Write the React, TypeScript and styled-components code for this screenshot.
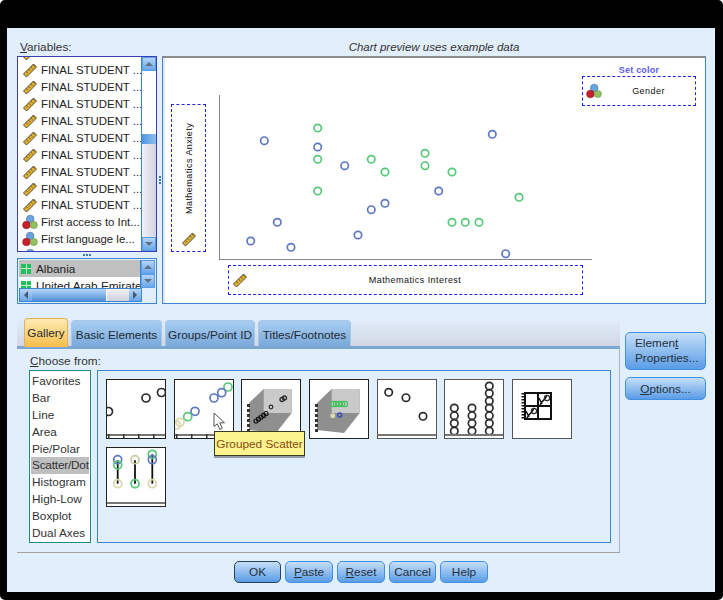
import React from 'react';
import styled, { createGlobalStyle } from 'styled-components';

const GlobalStyle = createGlobalStyle`
  html, body {
    margin: 0;
    padding: 0;
    background: #fff;
  }
  body {
    font-family: "Liberation Sans", Arial, sans-serif;
    font-size: 11.8px;
    color: #222;
  }
`;

const Frame = styled.div`
  width: 723px;
  height: 600px;
  box-sizing: border-box;
  padding: 28px 8px 8px 7px;
  background: #000;
  border-radius: 5px;
`;

const Dialog = styled.div`
  height: 564px;
  box-sizing: border-box;
  padding: 12px 9px 0 10px;
  background: #e1eefb;
  display: flex;
  flex-direction: column;
`;

const HeaderRow = styled.div`
  height: 16px;
  display: flex;
  align-items: flex-start;
  justify-content: space-between;
  line-height: 14px;
`;

const FieldLabel = styled.div`
  padding-left: 3px;
  color: #333;
`;

const PreviewNote = styled.div`
  width: 544px;
  text-align: center;
  font-style: italic;
  font-size: 11.5px;
  color: #333;
`;

const TopArea = styled.div`
  display: flex;
  height: 248px;
`;

const SourceColumn = styled.div`
  width: 140px;
  display: flex;
  flex-direction: column;
`;

const ListFrame = styled.div<{ $focused?: boolean }>`
  display: flex;
  box-sizing: border-box;
  background: #fff;
  border: 1px solid ${(p) => (p.$focused ? '#3c3cb4' : '#3b86cf')};
`;

const VariableFrame = styled(ListFrame)`
  height: 196px;
`;

const VariableRows = styled.div`
  flex: 1;
  min-width: 0;
  overflow: hidden;
  padding-left: 4px;
`;

const RowsShift = styled.div`
  margin-top: -12px;
`;

const VariableRow = styled.div`
  height: 16.9px;
  display: flex;
  align-items: center;
  gap: 3px;
  font-size: 11.4px;
  white-space: nowrap;
  color: #222;
`;

const HSplitter = styled.div`
  height: 6px;
  display: flex;
  justify-content: center;
  align-items: center;
`;

const GripDots = styled.span<{ $vertical?: boolean }>`
  display: flex;
  flex-direction: ${(p) => (p.$vertical ? 'column' : 'row')};
  gap: 1px;
  i {
    width: 2px;
    height: 2px;
    background: #3f78b8;
  }
`;

const CategoryFrame = styled(ListFrame)`
  height: 46px;
  padding: 1px;
  flex-direction: column;
  background: #e1eefb;
`;

const CategoryBody = styled.div`
  height: 28px;
  display: flex;
`;

const CategoryRows = styled.div`
  flex: 1;
  min-width: 0;
  overflow: hidden;
  background: #fff;
`;

const CategoryRow = styled.div<{ $selected?: boolean }>`
  height: 17px;
  display: flex;
  align-items: center;
  gap: 5px;
  padding-left: 2px;
  white-space: nowrap;
  background: ${(p) => (p.$selected ? '#c0c0c0' : '#fff')};
`;

const Swatch = styled.span`
  flex: none;
  width: 10px;
  height: 10px;
  background:
    linear-gradient(#c8f0d0, #c8f0d0) 50% 0 / 1px 100% no-repeat,
    linear-gradient(#c8f0d0, #c8f0d0) 0 50% / 100% 1px no-repeat,
    #1fc15a;
`;

const VScroll = styled.div`
  flex: none;
  width: 14px;
  display: flex;
  flex-direction: column;
  border-left: 1px solid #3b86cf;
`;

const HScroll = styled.div`
  height: 14px;
  width: 123px;
  display: flex;
  box-sizing: border-box;
  border: 1px solid #3b86cf;
`;

const ArrowButton = styled.div`
  flex: none;
  min-width: 12px;
  min-height: 12px;
  box-sizing: border-box;
  display: flex;
  align-items: center;
  justify-content: center;
  background: linear-gradient(#b5d5f8, #6aa6ea);
`;

const VArrowButton = styled(ArrowButton)`
  height: 14px;
  border: 1px solid #5a9fe6;
`;

const Arrow = styled.span<{ $dir: 'up' | 'down' | 'left' | 'right' }>`
  width: 0;
  height: 0;
  ${(p) =>
    p.$dir === 'up' || p.$dir === 'down'
      ? `border-left: 4px solid transparent; border-right: 4px solid transparent;`
      : `border-top: 4px solid transparent; border-bottom: 4px solid transparent;`}
  ${(p) => p.$dir === 'up' && 'border-bottom: 4px solid #5f7285;'}
  ${(p) => p.$dir === 'down' && 'border-top: 4px solid #5f7285;'}
  ${(p) => p.$dir === 'left' && 'border-right: 4px solid #44576c;'}
  ${(p) => p.$dir === 'right' && 'border-left: 4px solid #44576c;'}
`;

const TrackWhite = styled.div`
  height: 63px;
  background: #fff;
`;

const TrackThumb = styled.div`
  height: 10px;
  background: linear-gradient(90deg, #4f97e0, #8fbef0);
`;

const TrackRest = styled.div`
  flex: 1;
  background: linear-gradient(90deg, #f2f2f8, #d2d2e2);
`;

const HThumb = styled.div`
  width: 74px;
  background: linear-gradient(#b5d5f8, #4f91d8);
`;

const HRest = styled.div`
  flex: 1;
  background: linear-gradient(#f1f1f6, #d0d0df);
  border-left: 1px solid #fff;
`;

const VSplitter = styled.div`
  width: 5px;
  display: flex;
  align-items: center;
  justify-content: center;
`;

const PreviewPanel = styled.div`
  width: 544px;
  box-sizing: border-box;
  background: #fff;
  border: 1px solid #3b86cf;
  border-top: 2px solid #8b8b8b;
  display: grid;
  grid-template-columns: 35px 376px 114px;
  grid-template-rows: 1fr;
  padding: 0 9px 0 8px;
  box-shadow: inset 2px 0 0 #e6e6e6;
`;

const YColumn = styled.div`
  padding-top: 46px;
`;

const DropZone = styled.div`
  box-sizing: border-box;
  border: 1px dashed #2020f0;
  display: flex;
  align-items: center;
  font-size: 9px;
  letter-spacing: 0.45px;
  color: #111;
`;

const YZone = styled(DropZone)`
  height: 148px;
  flex-direction: column-reverse;
  padding-bottom: 4px;
`;

const YLabel = styled.div`
  flex: 1;
  display: flex;
  align-items: center;
  justify-content: center;
  writing-mode: vertical-rl;
  transform: rotate(180deg);
  white-space: nowrap;
`;

const PlotColumn = styled.div`
  padding-left: 13px;
  display: flex;
  flex-direction: column;
`;

const PlotCanvas = styled.svg`
  display: block;
  overflow: visible;
  flex: none;
`;

const XZone = styled(DropZone)`
  height: 30px;
  width: 355px;
  margin-left: 9px;
  margin-top: 5px;
  padding-left: 3px;
`;

const ZoneText = styled.div`
  flex: 1;
  text-align: center;
  white-space: nowrap;
`;

const LegendColumn = styled.div`
  padding-top: 8px;
`;

const LegendTitle = styled.div`
  height: 9px;
  line-height: 9px;
  text-align: center;
  font-size: 9px;
  font-weight: bold;
  letter-spacing: 0.2px;
  color: #5a5af0;
  margin-bottom: 1px;
`;

const LegendZone = styled(DropZone)`
  height: 30px;
  padding-left: 3px;
`;

const BottomArea = styled.div`
  margin-top: 14px;
  display: flex;
  gap: 5px;
`;

const TabPanel = styled.div`
  width: 603px;
  height: 235px;
  display: flex;
  flex-direction: column;
  box-sizing: border-box;
  border-bottom: 1px solid #a2a2a2;
`;

const TabStrip = styled.div`
  height: 31px;
  box-sizing: border-box;
  padding-left: 7px;
  display: flex;
  align-items: flex-end;
  gap: 3px;
  background: linear-gradient(#e1eefb, #d3d6e4);
  border-bottom: 3px solid #7ca6d4;
`;

const Tab = styled.div<{ $active?: boolean; $width: number }>`
  width: ${(p) => p.$width}px;
  height: ${(p) => (p.$active ? 29 : 26)}px;
  margin-bottom: ${(p) => (p.$active ? -1 : 0)}px;
  box-sizing: border-box;
  display: flex;
  align-items: center;
  justify-content: center;
  white-space: nowrap;
  border-radius: 4px 4px 0 0;
  border: 1px solid ${(p) => (p.$active ? '#dfb45c' : '#a8c8e8')};
  border-bottom: none;
  color: #1f2a33;
  padding-top: ${(p) => (p.$active ? 0 : 2)}px;
  background: ${(p) =>
    p.$active
      ? 'linear-gradient(#fdeab4, #f7be4a)'
      : 'linear-gradient(#a8cdf2, #7aa9da)'};
`;

const TabBody = styled.div`
  flex: 1;
  box-sizing: border-box;
  padding: 6px 8px 0 12px;
  border-right: 1px solid #aeb4bc;
`;

const ChooseLabel = styled.div`
  height: 15px;
  line-height: 13px;
  padding-left: 1px;
  color: #333;
`;

const ChooserRow = styled.div`
  display: flex;
  gap: 6px;
  height: 173px;
`;

const TypeList = styled.div`
  width: 62px;
  box-sizing: border-box;
  border: 1px solid #1f8f85;
  background: #fff;
  padding: 2px 1px;
`;

const TypeItem = styled.div<{ $selected?: boolean }>`
  height: 16.9px;
  line-height: 17px;
  padding-left: 1px;
  white-space: nowrap;
  color: #333;
  letter-spacing: ${(p) => (p.$selected ? '-0.2px' : '0')};
  background: ${(p) => (p.$selected ? '#bfbfbf' : 'transparent')};
`;

const GalleryBox = styled.div`
  flex: 1;
  box-sizing: border-box;
  border: 1px solid #3b86cf;
  padding: 8px;
  display: flex;
  flex-wrap: wrap;
  align-content: flex-start;
  gap: 8px 7.7px;
  position: relative;
`;

const Thumb = styled.div<{ $soft?: boolean }>`
  width: 60px;
  height: 60px;
  box-sizing: border-box;
  background: #fff;
  border: 1px solid ${(p) => (p.$soft ? '#555' : '#222')};
  overflow: hidden;
  svg {
    display: block;
    margin: -1px;
  }
`;

const Tooltip = styled.div`
  position: absolute;
  left: 116px;
  top: 60px;
  width: 91px;
  height: 25px;
  box-sizing: border-box;
  display: flex;
  align-items: center;
  justify-content: center;
  white-space: nowrap;
  background: #fbf38e;
  border: 1px solid #3a3a20;
  box-shadow: 0 2px 0 rgba(0, 0, 0, 0.35);
  color: #8a4b10;
`;

const Pointer = styled.svg`
  position: absolute;
  left: 115px;
  top: 41px;
`;

const SideButtons = styled.div`
  width: 81px;
  padding-top: 14px;
  display: flex;
  flex-direction: column;
  gap: 7px;
`;

const PushButton = styled.div<{ $default?: boolean; $width?: number; $height?: number }>`
  width: ${(p) => (p.$width ? `${p.$width}px` : '100%')};
  height: ${(p) => p.$height ?? 23}px;
  box-sizing: border-box;
  display: flex;
  align-items: center;
  justify-content: center;
  border-radius: 5px;
  border: 1px solid ${(p) => (p.$default ? '#27435f' : '#3f8fe2')};
  background: linear-gradient(#c5def9, #5a9ce6);
  color: #25303a;
  white-space: nowrap;
`;

const WrappedButton = styled(PushButton)`
  justify-content: flex-start;
  padding-left: 9px;
  line-height: 15px;
`;

const Footer = styled.div`
  padding-top: 8px;
  margin-left: -10px;
  margin-right: -9px;
  display: flex;
  justify-content: center;
  gap: 4px;
`;

const blue = '#5f78c4';
const green = '#56c878';
const khaki = '#d8d8ac';
const ink = '#2c2c2c';

const bluePoints = [
  [264.3, 140.7], [317.7, 147], [344.7, 165.7], [438.7, 191], [385, 203.3], [371.3, 209.7],
  [277.3, 222.3], [358, 235], [250.7, 241], [291, 247.3], [492.3, 134.3], [505.7, 253.7],
];

const greenPoints = [
  [317.7, 128], [317.7, 159.3], [371.3, 159.3], [385, 172], [425, 153.3], [425, 165.7],
  [452, 172], [317.7, 191], [452, 222.3], [465.3, 222.3], [479, 222.3], [519, 197.3],
];

// yellow measuring ruler used for scale variables
const RulerIcon = () => (
  <svg width="16" height="16" viewBox="0 0 16 16" style={{ flex: 'none' }}>
    <path d="M1.5 12 L11.5 2 L14.5 5 L4.5 15 Z" fill="#dfae2c" stroke="#55513c" strokeWidth="1" />
    <path d="M4.3 9.5 l1.7 1.7 M6.5 7.2 l1.7 1.7 M8.8 5 l1.7 1.7 M11 2.9 l1.7 1.7" stroke="#55513c" strokeWidth="0.9" />
  </svg>
);

// three balls used for nominal variables
const NominalIcon = () => (
  <svg width="16" height="16" viewBox="0 0 16 16" style={{ flex: 'none' }}>
    <circle cx="8.2" cy="5" r="3.8" fill="#6aa4dc" stroke="#3c6fa8" strokeWidth="0.6" />
    <circle cx="4.4" cy="11" r="3.8" fill="#c6202c" stroke="#8c1a20" strokeWidth="0.6" />
    <circle cx="11.8" cy="11" r="3.6" fill="#93c060" stroke="#6a9444" strokeWidth="0.6" />
  </svg>
);

const Ring = ({ x, y, color = ink, r = 3.7, w = 1.7 }: { x: number; y: number; color?: string; r?: number; w?: number }) => (
  <circle cx={x} cy={y} r={r} fill="none" stroke={color} strokeWidth={w} />
);

const ThumbSvg = ({ children }: { children: React.ReactNode }) => (
  <svg width="60" height="60" viewBox="0 0 60 60">
    {children}
  </svg>
);

const BaseLine = ({ ticks }: { ticks?: boolean }) => (
  <>
    <rect x="1" y="55" width="58" height="2" fill="#777" />
    {ticks &&
      [2, 17, 32, 47].map((x) => <rect key={x} x={x} y="55" width="1.5" height="4" fill="#333" />)}
  </>
);

const Cube = ({ children }: { children: React.ReactNode }) => (
  <ThumbSvg>
    <path d="M8 24 L22.7 10 L50.7 10 L50.7 34 L35 54 L8 51 Z" fill="#8f8f8f" />
    <path d="M22.7 10 H50.7 V34 H22.7 Z" fill="#c9c9c9" />
    {[25, 30, 35, 40, 45, 50].map((y) => (
      <rect key={y} x="6" y={y} width="3" height="3" fill="#333" />
    ))}
    {children}
  </ThumbSvg>
);

const ScatterThumb = () => (
  <ThumbSvg>
    <Ring x={2.5} y={32.5} r={4} />
    <Ring x={40} y={19} r={4} />
    <Ring x={55.5} y={13.5} r={4} />
    <BaseLine ticks />
  </ThumbSvg>
);

const GroupedThumb = () => (
  <ThumbSvg>
    <Ring x={54} y={8} r={4} color={green} />
    <Ring x={47.7} y={13.7} r={4} color={blue} />
    <Ring x={40} y={19} r={4} color={blue} />
    <Ring x={21} y={32.3} r={4} color={blue} />
    <Ring x={13.7} y={37.7} r={4} color={green} />
    <Ring x={6} y={43.3} r={4} color={khaki} />
    <Ring x={2.5} y={46} r={4} color={khaki} />
    <BaseLine ticks />
  </ThumbSvg>
);

const Cube3dThumb = () => (
  <Cube>
    <Ring x={30} y={28} r={1.8} w={1.2} />
    <Ring x={41} y={20.5} r={2} w={1.3} />
    <Ring x={43.5} y={19} r={2} w={1.3} />
    {[15, 17.5, 20, 22.5, 25].map((x) => (
      <Ring key={x} x={x} y={42 - (x - 15) * 0.75} r={2} w={1.2} color="#111" />
    ))}
  </Cube>
);

const GroupedCubeThumb = () => (
  <Cube>
    {[24, 27, 30, 33, 36].map((x) => (
      <Ring key={x} x={x} y={25} r={2.7} w={1.1} color="#44c05c" />
    ))}
    <circle cx="23.7" cy="36.7" r="2.5" fill={khaki} />
    <circle cx="30.7" cy="36" r="2" fill="none" stroke="#3350b8" strokeWidth="1.5" />
  </Cube>
);

const SimpleDotThumb = () => (
  <ThumbSvg>
    <Ring x={11.7} y={13.3} />
    <Ring x={29} y={18.7} />
    <Ring x={46} y={37.3} />
    <BaseLine />
  </ThumbSvg>
);

const StackedDotThumb = () => (
  <ThumbSvg>
    {[10.3, 28].map((x) =>
      [29, 36.7, 44.3, 52].map((y) => <Ring key={`${x}-${y}`} x={x} y={y} />),
    )}
    {[7, 14.3, 22, 29, 36.7, 44.3, 52].map((y) => (
      <Ring key={y} x={45.3} y={y} />
    ))}
    <BaseLine />
  </ThumbSvg>
);

const MatrixThumb = () => (
  <ThumbSvg>
    <rect x="12" y="13" width="28" height="28" fill="#111" />
    <rect x="14" y="15" width="11" height="11" fill="#fff" />
    <rect x="27" y="28" width="11" height="11" fill="#fff" />
    <rect x="27" y="15" width="11" height="11" fill="#fff" />
    <rect x="14" y="28" width="11" height="11" fill="#fff" />
    <path d="M27 19 L30 25 M28 26 C31 20 33 22 35 16 M14 32 L17 38 M15 39 C18 33 20 35 22 29" stroke="#111" strokeWidth="1.5" fill="none" />
    <Ring x={35} y={19} r={2.6} w={1.2} />
    <Ring x={22} y={32} r={2.6} w={1.2} />
    {[14, 17, 20, 23, 26, 29, 32, 35, 38].map((y) => (
      <rect key={y} x="9.5" y={y} width="3" height="1.5" fill="#111" />
    ))}
  </ThumbSvg>
);

const DropLineThumb = () => (
  <ThumbSvg>
    {[
      [11.7, 13.3],
      [29, 13.3],
      [46.3, 7.3],
    ].map(([x, y]) => (
      <line key={x} x1={x} y1={y} x2={x} y2={36.7} stroke="#111" strokeWidth="1.8" />
    ))}
    <Ring x={11.7} y={12.7} color={blue} r={4} />
    <Ring x={11.7} y={18} color={green} r={4} />
    <Ring x={11.7} y={36.7} color={khaki} r={4} />
    <Ring x={29} y={12.7} color="#c8c8a4" r={4} />
    <Ring x={29} y={36.7} color={green} r={4} />
    <Ring x={46.3} y={7.3} color={green} r={4} />
    <Ring x={46.3} y={12.7} color={blue} r={4} />
    <Ring x={46.3} y={36.7} color={khaki} r={4} />
    <BaseLine />
  </ThumbSvg>
);

const variableRows = [
  ...Array.from({ length: 10 }, () => ({ icon: 'scale', label: 'FINAL STUDENT ...' })),
  { icon: 'nominal', label: 'First access to Int...' },
  { icon: 'nominal', label: 'First language le...' },
  { icon: 'nominal', label: 'Gender' },
];

const chartTypes = [
  'Favorites', 'Bar', 'Line', 'Area', 'Pie/Polar', 'Scatter/Dot',
  'Histogram', 'High-Low', 'Boxplot', 'Dual Axes',
];

const tabs = [
  { label: 'Gallery', width: 44, active: true },
  { label: 'Basic Elements', width: 91 },
  { label: 'Groups/Point ID', width: 90 },
  { label: 'Titles/Footnotes', width: 93 },
];

const Dots = ({ vertical }: { vertical?: boolean }) => (
  <GripDots $vertical={vertical}>
    <i />
    <i />
    <i />
  </GripDots>
);

export default function App() {
  return (
    <Frame>
      <GlobalStyle />
      <Dialog>
        <HeaderRow>
          <FieldLabel>
            <u>V</u>ariables:
          </FieldLabel>
          <PreviewNote>Chart preview uses example data</PreviewNote>
        </HeaderRow>
        <TopArea>
          <SourceColumn>
            <VariableFrame $focused>
              <VariableRows>
                <RowsShift>
                  {variableRows.map((row, i) => (
                    <VariableRow key={i}>
                      {row.icon === 'scale' ? <RulerIcon /> : <NominalIcon />}
                      {row.label}
                    </VariableRow>
                  ))}
                </RowsShift>
              </VariableRows>
              <VScroll>
                <VArrowButton>
                  <Arrow $dir="up" />
                </VArrowButton>
                <TrackWhite />
                <TrackThumb />
                <TrackRest />
                <VArrowButton>
                  <Arrow $dir="down" />
                </VArrowButton>
              </VScroll>
            </VariableFrame>
            <HSplitter>
              <Dots />
            </HSplitter>
            <CategoryFrame>
              <CategoryBody>
                <CategoryRows>
                  <CategoryRow $selected>
                    <Swatch />
                    Albania
                  </CategoryRow>
                  <CategoryRow>
                    <Swatch />
                    United Arab Emirates
                  </CategoryRow>
                </CategoryRows>
                <VScroll>
                  <VArrowButton>
                    <Arrow $dir="up" />
                  </VArrowButton>
                  <VArrowButton>
                    <Arrow $dir="down" />
                  </VArrowButton>
                </VScroll>
              </CategoryBody>
              <HScroll>
                <ArrowButton>
                  <Arrow $dir="left" />
                </ArrowButton>
                <HThumb />
                <HRest />
                <ArrowButton>
                  <Arrow $dir="right" />
                </ArrowButton>
              </HScroll>
            </CategoryFrame>
          </SourceColumn>
          <VSplitter>
            <Dots vertical />
          </VSplitter>
          <PreviewPanel>
            <YColumn>
              <YZone>
                <RulerIcon />
                <YLabel>Mathematics Anxiety</YLabel>
              </YZone>
            </YColumn>
            <PlotColumn>
              <PlotCanvas width="363" height="202" viewBox="219 58 363 202">
                <line x1="219.5" y1="95" x2="219.5" y2="260" stroke="#888" />
                <line x1="219" y1="259.5" x2="592" y2="259.5" stroke="#888" />
                {bluePoints.map(([x, y]) => (
                  <Ring key={`b${x}${y}`} x={x} y={y} color={blue} />
                ))}
                {greenPoints.map(([x, y]) => (
                  <Ring key={`g${x}${y}`} x={x} y={y} color={green} />
                ))}
              </PlotCanvas>
              <XZone>
                <RulerIcon />
                <ZoneText>Mathematics Interest</ZoneText>
              </XZone>
            </PlotColumn>
            <LegendColumn>
              <LegendTitle>Set color</LegendTitle>
              <LegendZone>
                <NominalIcon />
                <ZoneText>Gender</ZoneText>
              </LegendZone>
            </LegendColumn>
          </PreviewPanel>
        </TopArea>
        <BottomArea>
          <TabPanel>
            <TabStrip>
              {tabs.map((tab) => (
                <Tab key={tab.label} $active={tab.active} $width={tab.width}>
                  {tab.label}
                </Tab>
              ))}
            </TabStrip>
            <TabBody>
              <ChooseLabel>
                <u>C</u>hoose from:
              </ChooseLabel>
              <ChooserRow>
                <TypeList>
                  {chartTypes.map((name) => (
                    <TypeItem key={name} $selected={name === 'Scatter/Dot'}>
                      {name}
                    </TypeItem>
                  ))}
                </TypeList>
                <GalleryBox>
                  <Thumb><ScatterThumb /></Thumb>
                  <Thumb><GroupedThumb /></Thumb>
                  <Thumb><Cube3dThumb /></Thumb>
                  <Thumb><GroupedCubeThumb /></Thumb>
                  <Thumb $soft><SimpleDotThumb /></Thumb>
                  <Thumb $soft><StackedDotThumb /></Thumb>
                  <Thumb $soft><MatrixThumb /></Thumb>
                  <Thumb><DropLineThumb /></Thumb>
                  <Pointer width="13" height="19" viewBox="0 0 13 19">
                    <path d="M1 1 L1 14.5 L4.3 11.8 L6.8 17.5 L9.3 16.3 L6.8 10.8 L11.5 10.8 Z" fill="#fff" stroke="#555" strokeWidth="1" />
                  </Pointer>
                  <Tooltip>Grouped Scatter</Tooltip>
                </GalleryBox>
              </ChooserRow>
            </TabBody>
          </TabPanel>
          <SideButtons>
            <WrappedButton $height={38}>
              <span>
                Elemen<u>t</u>
                <br />
                Properties...
              </span>
            </WrappedButton>
            <PushButton>
              <span>
                <u>O</u>ptions...
              </span>
            </PushButton>
          </SideButtons>
        </BottomArea>
        <Footer>
          <PushButton $default $width={47} $height={22}>OK</PushButton>
          <PushButton $width={48} $height={22}><span><u>P</u>aste</span></PushButton>
          <PushButton $width={48} $height={22}><span><u>R</u>eset</span></PushButton>
          <PushButton $width={47} $height={22}>Cancel</PushButton>
          <PushButton $width={48} $height={22}>Help</PushButton>
        </Footer>
      </Dialog>
    </Frame>
  );
}
